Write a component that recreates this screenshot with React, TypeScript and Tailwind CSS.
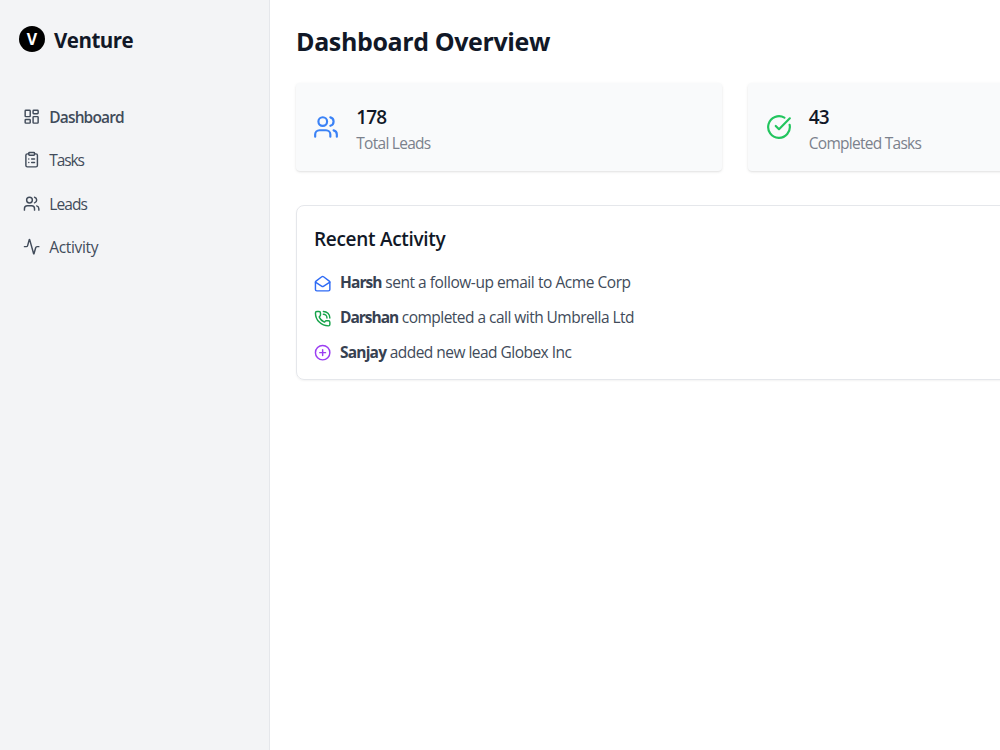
import {
  Activity,
  CircleCheckBig,
  CirclePlus,
  ClipboardList,
  LayoutDashboard,
  MailOpen,
  PhoneCall,
  Users,
} from 'lucide-react'

const navItems = [
  {
    label: 'Dashboard',
    icon: LayoutDashboard,
    text: 'font-semibold tracking-[-0.85px]',
  },
  { label: 'Tasks', icon: ClipboardList, text: 'tracking-[-1.1px]' },
  { label: 'Leads', icon: Users, text: 'tracking-[-0.9px]' },
  { label: 'Activity', icon: Activity, text: 'tracking-[-0.35px]' },
]

const stats = [
  { value: '178', label: 'Total Leads', icon: Users, color: 'text-[#3b82f6]' },
  {
    value: '43',
    label: 'Completed Tasks',
    icon: CircleCheckBig,
    color: 'text-[#22c55e]',
  },
]

const activities = [
  {
    name: 'Harsh',
    text: 'sent a follow-up email to Acme Corp',
    icon: MailOpen,
    color: 'text-[#2f6bf5]',
    nameTracking: 'tracking-[-0.9px]',
    tracking: 'tracking-[-0.45px]',
  },
  {
    name: 'Darshan',
    text: 'completed a call with Umbrella Ltd',
    icon: PhoneCall,
    color: 'text-[#16a34a]',
    nameTracking: 'tracking-[-1px]',
    tracking: 'tracking-[-0.53px]',
  },
  {
    name: 'Sanjay',
    text: 'added new lead Globex Inc',
    icon: CirclePlus,
    color: 'text-[#9b3df2]',
    nameTracking: 'tracking-[-0.8px]',
    tracking: 'tracking-[-0.53px]',
  },
]

function Sidebar() {
  return (
    <aside className="w-[270px] shrink-0 bg-[#f3f4f6] border-r border-[#e5e7eb] pt-[26px]">
      <div className="flex items-center pl-[19px] h-[26px]">
        <div className="size-[26px] rounded-full bg-black text-white text-[16px] font-bold flex items-center justify-center">
          V
        </div>
        <span className="ml-[9px] mt-[2px] text-[20.5px] font-bold tracking-[-0.5px] text-[#111827]">
          Venture
        </span>
      </div>
      <nav className="mt-[43px] flex flex-col">
        {navItems.map(({ label, icon: Icon, text }) => (
          <a
            key={label}
            className="flex items-center gap-[8.7px] h-[43.3px] pl-[23.3px] text-[15.5px] text-[#414b5a]"
          >
            <Icon className="size-[17.3px]" />
            <span className={`mt-[2px] ${text}`}>{label}</span>
          </a>
        ))}
      </nav>
    </aside>
  )
}

export default function App() {
  return (
    <div className="flex h-[750px] w-[1000px] overflow-hidden bg-white font-['Open_Sans','Noto_Sans',sans-serif]">
      <Sidebar />
      <main className="pl-[26px] pt-[23px]">
        <div className="w-[879px]">
          <h1 className="h-[36px] leading-[36px] text-[25px] font-bold tracking-[-0.38px] text-[#111827]">
            Dashboard Overview
          </h1>
          <div className="mt-[24px] mr-[0.5px] -ml-[0.5px] grid grid-cols-2 gap-[26px]">
            {stats.map(({ value, label, icon: Icon, color }) => (
              <div
                key={label}
                className="flex items-center gap-[17.3px] h-[88px] pl-[17.5px] rounded-[4px] bg-[#f9fafb] shadow-[0_1px_3px_rgba(0,0,0,0.1),0_1px_2px_-1px_rgba(0,0,0,0.1)]"
              >
                <Icon className={`size-[26px] ${color}`} />
                <div className="pt-[5px]">
                  <p className="text-[19px] leading-[28px] font-semibold tracking-[-0.9px] text-[#111827]">
                    {value}
                  </p>
                  <p className="text-[15.5px] leading-[25px] tracking-[-0.73px] text-[#7b818c]">
                    {label}
                  </p>
                </div>
              </div>
            ))}
          </div>
          <section className="mt-[34px] h-[175px] rounded-[8px] border border-[#e5e7eb] px-[17px] pt-[18px] shadow-[0_1px_2px_rgba(0,0,0,0.05)]">
            <h2 className="text-[19px] leading-[30px] font-semibold tracking-[-0.3px] text-[#111827]">
              Recent Activity
            </h2>
            <ul className="mt-[16px] flex flex-col gap-[8.7px]">
              {activities.map(
                ({ name, text, icon: Icon, color, nameTracking, tracking }) => (
                  <li
                    key={name}
                    className="flex items-center gap-[8.7px] h-[26px] text-[15.5px] text-[#414b5a]"
                  >
                    <Icon className={`size-[17.3px] mt-[1.5px] ${color}`} />
                    <span className={tracking}>
                      <strong className={`font-bold text-[#374151] ${nameTracking}`}>
                        {name}
                      </strong>{' '}
                      {text}
                    </span>
                  </li>
                )
              )}
            </ul>
          </section>
        </div>
      </main>
    </div>
  )
}
